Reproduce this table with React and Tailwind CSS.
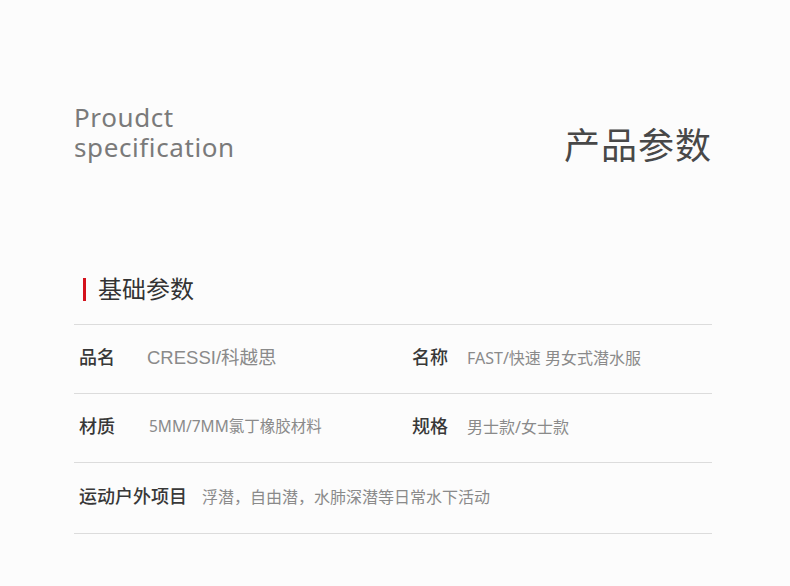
import React from 'react';

const rows = [
  [
    { label: '品名', value: 'CRESSI/科越思', lw: 'w-[68px]', vs: 'text-[18.5px]', ff: '"Liberation Sans", "Noto Sans CJK SC", sans-serif' },
    { label: '名称', value: 'FAST/快速 男女式潜水服', lw: 'w-[55px]', vs: 'text-[16px]' },
  ],
  [
    { label: '材质', value: '5MM/7MM氯丁橡胶材料', lw: 'w-[70px]', vs: 'text-[15.5px]' },
    { label: '规格', value: '男士款/女士款', lw: 'w-[55px]', vs: 'text-[16px]' },
  ],
];

export default function App() {
  return (
    <div className="w-[790px] h-[586px] bg-[#fcfcfc] overflow-hidden" style={{ fontFamily: '"Noto Sans", "Noto Sans CJK SC", sans-serif' }}>
      <div className="ml-[74px] w-[638px]">
        <div className="flex justify-between items-start pt-[102px]">
          <div className="text-[26px] leading-[30px] text-[#7a7a7a] tracking-[0.6px]">
            <div>Proudct</div>
            <div>specification</div>
          </div>
          <div className="mt-[26px] text-[36px] leading-[36px] text-[#484848] tracking-[1px]">产品参数</div>
        </div>

        <div className="mt-[113px] flex items-center">
          <div className="ml-[9px] w-[3px] h-[23px] bg-[#d4121c]" />
          <div className="ml-[12px] text-[24px] leading-[24px] text-[#333]">基础参数</div>
        </div>

        <div className="mt-[23px] border-t border-[#dcdcdc]">
          {rows.map((row, i) => (
            <div key={i} className="h-[69px] pb-[3px] flex items-center border-b border-[#dcdcdc]">
              {row.map((c, j) => (
                <div key={j} className={`flex items-center ${j === 0 ? 'w-[338px] pl-[5px]' : 'flex-1'}`}>
                  <span className={`${c.lw} shrink-0 text-[18px] font-medium text-[#383838]`}>{c.label}</span>
                  <span className={`${c.vs} text-[#8a8a8a]`} style={c.ff ? { fontFamily: c.ff } : undefined}>{c.value}</span>
                </div>
              ))}
            </div>
          ))}
          <div className="h-[71px] pb-[3px] flex items-center border-b border-[#dcdcdc] pl-[5px]">
            <span className="text-[18px] font-medium text-[#383838]">运动户外项目</span>
            <span className="ml-[15px] text-[16px] text-[#8a8a8a]">浮潜，自由潜，水肺深潜等日常水下活动</span>
          </div>
        </div>
      </div>
    </div>
  );
}
